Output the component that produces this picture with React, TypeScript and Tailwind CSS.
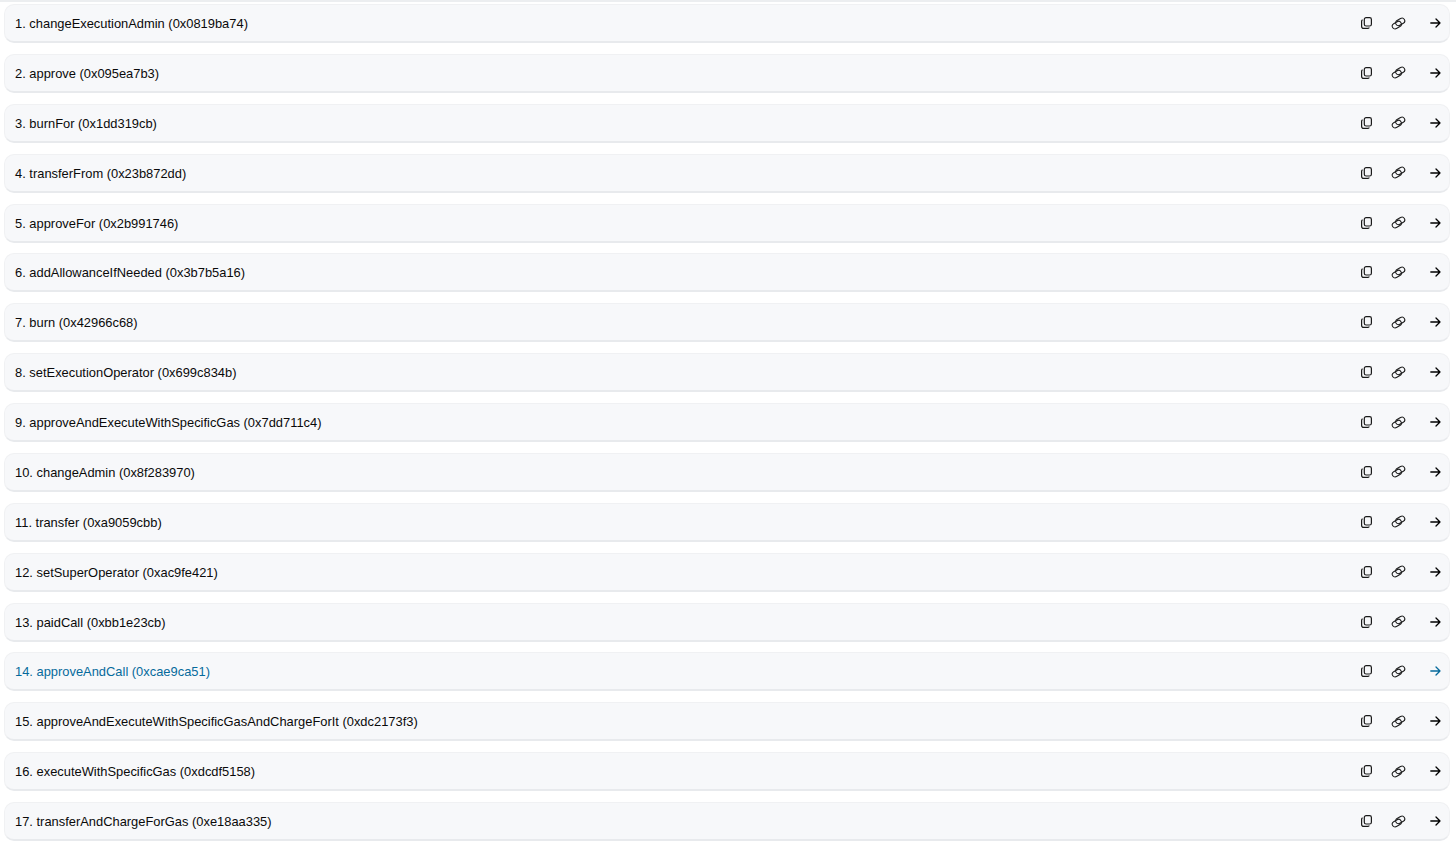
const methods = [
  'changeExecutionAdmin (0x0819ba74)',
  'approve (0x095ea7b3)',
  'burnFor (0x1dd319cb)',
  'transferFrom (0x23b872dd)',
  'approveFor (0x2b991746)',
  'addAllowanceIfNeeded (0x3b7b5a16)',
  'burn (0x42966c68)',
  'setExecutionOperator (0x699c834b)',
  'approveAndExecuteWithSpecificGas (0x7dd711c4)',
  'changeAdmin (0x8f283970)',
  'transfer (0xa9059cbb)',
  'setSuperOperator (0xac9fe421)',
  'paidCall (0xbb1e23cb)',
  'approveAndCall (0xcae9ca51)',
  'approveAndExecuteWithSpecificGasAndChargeForIt (0xdc2173f3)',
  'executeWithSpecificGas (0xdcdf5158)',
  'transferAndChargeForGas (0xe18aa335)',
];

function CopyIcon() {
  return (
    <svg className="w-[11px] h-[12px]" viewBox="0 0 11 12" fill="none" stroke="currentColor" strokeWidth={1.2}>
      <rect x="3.3" y="0.6" width="7.1" height="8.4" rx="1.8" />
      <path d="M1.6 2.8 C0.9 3.1 0.6 3.7 0.6 4.4 V9.2 C0.6 10.5 1.4 11.4 2.7 11.4 H6.6 C7.4 11.4 8 11 8.3 10.4" />
    </svg>
  );
}

function LinkIcon() {
  return (
    <svg className="w-[15px] h-[13px]" viewBox="0 0 15 13" fill="none" stroke="currentColor" strokeWidth={1.05}>
      <rect x="4.4" y="2.1" width="9.6" height="5.6" rx="2.8" transform="rotate(-30 9.2 4.9)" />
      <rect x="1" y="5.3" width="9.6" height="5.6" rx="2.8" transform="rotate(-30 5.8 8.1)" />
    </svg>
  );
}

function ArrowIcon() {
  return (
    <svg className="w-[11px] h-[10px]" viewBox="0 0 11 10" fill="none" stroke="currentColor" strokeWidth={1.3} strokeLinecap="round" strokeLinejoin="round">
      <path d="M0.8 5 H10 M6 1 L10 5 L6 9" />
    </svg>
  );
}

function MethodRow({ index, label }: { index: number; label: string }) {
  const active = index === 14;
  return (
    <div className="h-[39px] shrink-0 flex items-center bg-[#f7f8fa] rounded-[10px] border border-[#f0f1f3] border-b-2 border-b-[#e8eaed] pl-[10px] pr-[8px]">
      <p className={`flex-1 pt-[2px] text-[12.9px] leading-[18px] whitespace-nowrap ${active ? 'text-[#066a9c]' : 'text-[#0a0a0a]'}`}>
        {index}. {label}
      </p>
      <div className="flex items-center text-[#1a1a1a]">
        <CopyIcon />
        <div className="ml-[19px]"><LinkIcon /></div>
        <div className={`ml-[24px] ${active ? 'text-[#066a9c]' : 'text-black'}`}><ArrowIcon /></div>
      </div>
    </div>
  );
}

export default function App() {
  return (
    <div className="w-[1456px] h-[847px] overflow-hidden bg-white font-['Liberation_Sans',Arial,sans-serif]">
      <div className="h-[2px] bg-[#eceef0]" />
      <div className="flex flex-col gap-[10.875px] pt-[2px] pl-[4px] pr-[6px]">
        {methods.map((label, i) => (
          <MethodRow key={label} index={i + 1} label={label} />
        ))}
      </div>
    </div>
  );
}
